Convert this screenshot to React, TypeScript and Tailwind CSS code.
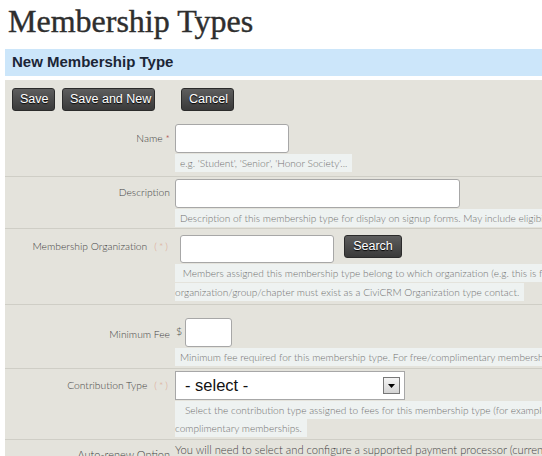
const Req = () => <span className="ml-[7px] tracking-[2px] text-[#dca48e]">(*)</span>;

const Help = ({ children, className = "" }: { children: React.ReactNode; className?: string }) => (
  <div className={`h-[18px] w-fit whitespace-nowrap bg-[#eef2f1] px-[5px] text-[10.1px] leading-[18px] font-light text-[#707070] ${className}`}>
    {children}
  </div>
);

const Btn = ({ label, className = "" }: { label: string; className?: string }) => (
  <button
    className={`h-[23px] whitespace-nowrap rounded-[3px] border border-[#2b2b2b] bg-gradient-to-b from-[#5e5e5e] to-[#3a3a3a] px-[7px] font-['Liberation_Sans',Arial,sans-serif] text-[12.5px] leading-[21px] text-white [text-shadow:0_1px_1px_#000] ${className}`}
  >
    {label}
  </button>
);

const Row = ({ label, children, last = false }: { label: React.ReactNode; children: React.ReactNode; last?: boolean }) => (
  <div className={`flex ${last ? "" : "border-b border-[#cfcec6]"}`}>
    <div className="w-[170px] shrink-0 pr-[5px] text-right text-[10.3px] font-light leading-[14px] text-[#444]">{label}</div>
    <div className="min-w-0 flex-1">{children}</div>
  </div>
);

export default function App() {
  return (
    <div className="h-[456px] w-[542px] overflow-hidden bg-white font-['Lato','Open_Sans',sans-serif]">
      <h1 className="pl-[8px] pt-[3px] font-['Liberation_Serif',serif] text-[32px] leading-[36px] text-[#2e2e2e] [-webkit-text-stroke:0.4px_#2e2e2e]">
        Membership Types
      </h1>
      <div className="ml-[5px] mt-[10px] flex h-[27px] items-center bg-[#cce6fa] pl-[7px] font-['Liberation_Sans',Arial,sans-serif] text-[15px] font-bold text-[#1b2536]">
        New Membership Type
      </div>
      <div className="ml-[5px] mt-[4px] bg-[#e4e3dc]">
        <div className="flex items-center pl-[7px] pt-[8px]">
          <Btn label="Save" className="w-[43px] px-0" />
          <Btn label="Save and New" className="ml-[7px] w-[93px] px-0" />
          <Btn label="Cancel" className="ml-[26px] w-[53px] px-0" />
        </div>

        <div className="mt-[6px]">
          <Row
            label={
              <div className="pt-[14px]">
                Name<span className="ml-[3px] text-[#a01818]">*</span>
              </div>
            }
          >
            <div className="pb-[4px] pt-[7px]">
              <div className="h-[29px] w-[114px] rounded-[3px] border border-[#a7a7a7] bg-white" />
              <Help className="mt-[1px]">e.g. 'Student', 'Senior', 'Honor Society'...</Help>
            </div>
          </Row>

          <Row label={<div className="pt-[8px]">Description</div>}>
            <div className="pb-[1px] pt-[2px]">
              <div className="h-[29px] w-[285px] rounded-[3px] border border-[#a7a7a7] bg-white" />
              <Help className="mt-[1px]">
                Description of this membership type for display on signup forms. May include eligibility, benefits, terms, etc.
              </Help>
            </div>
          </Row>

          <Row
            label={
              <div className="pt-[10px]">
                Membership Organization
                <Req />
              </div>
            }
          >
            <div className="pb-[3px] pt-[6px]">
              <div className="flex items-start pl-[5px]">
                <div className="h-[28px] w-[154px] rounded-[3px] border border-[#a7a7a7] bg-white" />
                <Btn label="Search" className="ml-[10px] w-[58px] px-0" />
              </div>
              <Help className="mt-[1px] pl-[5px]">
                &nbsp;Members assigned this membership type belong to which organization (e.g. this is for membership in 'Women's Hockey').
              </Help>
              <Help className="mt-[1px] pl-0">
                organization/group/chapter must exist as a CiviCRM Organization type contact.
              </Help>
            </div>
          </Row>

          <Row label={<div className="pt-[22px]">Minimum Fee</div>}>
            <div className="pb-[2px] pt-[13px]">
              <div className="flex items-end">
                <span className="mb-[7px] pl-[1px] pr-[3px] text-[10.5px] font-light text-[#444]">$</span>
                <div className="h-[29px] w-[47px] rounded-[3px] border border-[#a7a7a7] bg-white" />
              </div>
              <Help className="mt-[1px]">
                Minimum fee required for this membership type. For free/complimentary memberships - set minimum fee to zero (0).
              </Help>
            </div>
          </Row>

          <Row
            label={
              <div className="pt-[9px]">
                Contribution Type
                <Req />
              </div>
            }
          >
            <div className="pb-[2px] pt-[2px]">
              <div className="flex h-[29px] w-[230px] items-center justify-between border border-[#a7a7a7] bg-white pl-[9px] pr-[4px] font-['Liberation_Sans',Arial,sans-serif] text-[16.5px] text-[#111]">
                <span>- select -</span>
                <span className="flex h-[17px] w-[17px] items-center justify-center border border-[#777] bg-gradient-to-b from-[#f4f4f4] to-[#d4d4d4]">
                  <svg width="7" height="4" viewBox="0 0 7 4">
                    <path d="M0 0h7L3.5 4z" fill="#000" />
                  </svg>
                </span>
              </div>
              <Help className="mt-[1px] pl-[10px]">
                Select the contribution type assigned to fees for this membership type (for example 'Membership Fees'). This is required for all membership types - including free or
              </Help>
              <Help className="pl-0">complimentary memberships.</Help>
            </div>
          </Row>

          <Row last label={<div className="pt-[8px] text-[11px]">Auto-renew Option</div>}>
            <div className="whitespace-nowrap pt-[2px] text-[11.2px] font-light text-[#444]">
              You will need to select and configure a supported payment processor (currently Authorize.Net, PayPal Pro, or PayPal Website Standard) in order to offer automatically renewing memberships.
            </div>
          </Row>
        </div>
      </div>
    </div>
  );
}
